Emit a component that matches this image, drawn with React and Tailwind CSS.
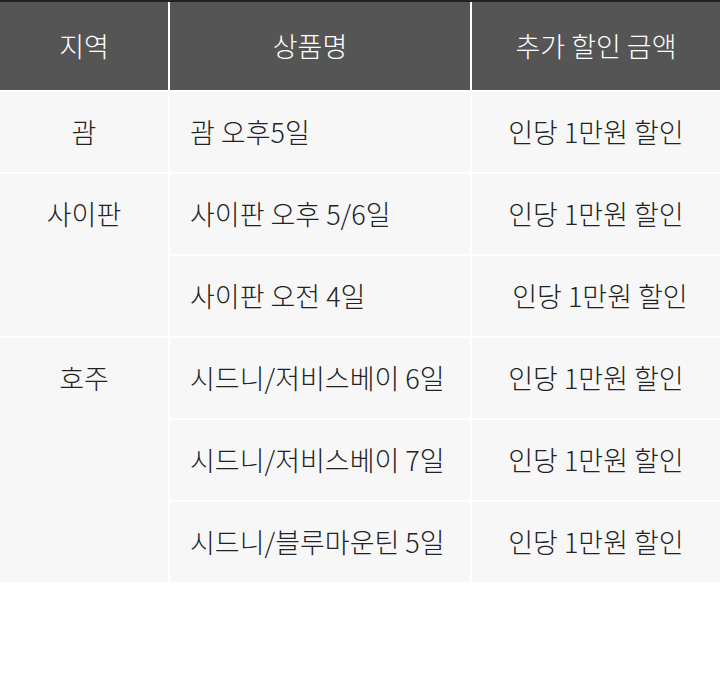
const rows = [
  { region: "괌", span: 1, items: [{ name: "괌 오후5일", amount: "인당 1만원 할인" }] },
  {
    region: "사이판",
    span: 2,
    items: [
      { name: "사이판 오후 5/6일", amount: "인당 1만원 할인" },
      { name: "사이판 오전 4일", amount: "인당 1만원 할인", shift: true },
    ],
  },
  {
    region: "호주",
    span: 3,
    items: [
      { name: "시드니/저비스베이 6일", amount: "인당 1만원 할인" },
      { name: "시드니/저비스베이 7일", amount: "인당 1만원 할인" },
      { name: "시드니/블루마운틴 5일", amount: "인당 1만원 할인" },
    ],
  },
];

const spanClass = { 1: "row-span-1", 2: "row-span-2", 3: "row-span-3" };

export default function App() {
  return (
    <div
      className="w-[720px] h-[682px] bg-white"
      style={{ fontFamily: '"Noto Sans CJK KR", "Noto Sans", sans-serif' }}
    >
      <div className="border-t-2 border-[#222]">
        <div className="grid grid-cols-[168px_300px_1fr] grid-rows-[88px] auto-rows-[80px] gap-[2px] bg-white text-[27px] leading-[36px] font-light">
          <div className="flex items-center justify-center bg-[#555] text-white">지역</div>
          <div className="flex items-center justify-center bg-[#555] pr-5 text-white">상품명</div>
          <div className="flex items-center justify-center bg-[#555] text-white">추가 할인 금액</div>

          {rows.map((group) =>
            group.items.map((item, i) => (
              <>
                {i === 0 && (
                  <div
                    key={group.region}
                    className={`${spanClass[group.span]} flex justify-center bg-[#f7f7f7] pt-[22px] text-[#222]`}
                  >
                    {group.region}
                  </div>
                )}
                <div key={item.name} className="flex items-center bg-[#f7f7f7] pl-5 text-[#222]">
                  {item.name}
                </div>
                <div
                  key={item.name + "-amt"}
                  className={`flex items-center justify-center bg-[#f7f7f7] text-[#222] ${item.shift ? "pl-2" : ""}`}
                >
                  {item.amount}
                </div>
              </>
            ))
          )}
        </div>
      </div>
    </div>
  );
}
